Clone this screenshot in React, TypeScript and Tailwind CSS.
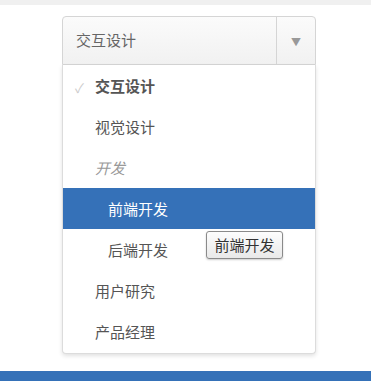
import React from "react";

const font = { fontFamily: '"Noto Sans CJK SC", "Noto Sans", sans-serif' };

function Item({ children, active = false, selected = false, indent = false }: { children: React.ReactNode; active?: boolean; selected?: boolean; indent?: boolean }) {
  return (
    <div
      className={`relative h-[41px] flex items-center pt-[2px] text-[15px] ${indent ? "pl-[45px]" : "pl-[32px]"} ${active ? "bg-[#3571b8] text-white" : "text-[#555]"} ${selected ? "font-bold text-[#444]" : ""}`}
    >
      {selected && (
        <span className="absolute left-[12px] top-[13px] text-[#ccc] text-[13px] font-normal">✓</span>
      )}
      {children}
    </div>
  );
}

export default function App() {
  return (
    <div className="w-[371px] h-[381px] bg-white flex flex-col overflow-hidden" style={font}>
      <div className="h-[5px] bg-[#f0f0f0] shrink-0" />
      <div className="flex-1 relative">
        <div className="ml-[62px] mt-[11px] w-[254px]">
          <div className="h-[49px] flex border border-[#d5d5d5] rounded-t-[4px] bg-gradient-to-b from-[#fbfbfb] to-[#f1f1f1]">
            <div className="flex-1 flex items-center pl-[13px] text-[15px] text-[#666]">交互设计</div>
            <div className="w-[39px] border-l border-[#d5d5d5] flex items-center justify-center text-[#999] text-[10px] pt-[2px]">▼</div>
          </div>
          <div className="pb-[1px] bg-white border border-t-0 border-[#dcdcdc] rounded-b-[4px] shadow-[0_2px_4px_rgba(0,0,0,0.12)]">
            <Item selected>交互设计</Item>
            <Item>视觉设计</Item>
            <div className="h-[41px] flex items-center pt-[2px] pl-[32px] text-[15px] italic text-[#999]">开发</div>
            <Item active indent>前端开发</Item>
            <Item indent>后端开发</Item>
            <Item>用户研究</Item>
            <Item>产品经理</Item>
          </div>
        </div>
        <div className="absolute left-[206px] top-[226px] w-[77px] h-[28px] flex items-center justify-center border border-[#8a8a8a] rounded-[3px] bg-gradient-to-b from-[#fdfdfd] to-[#e9e9e9] text-[15px] text-[#333] shadow-[0_1px_2px_rgba(0,0,0,0.2)]">
          前端开发
        </div>
      </div>
      <div className="h-[10px] bg-[#3571b8] shrink-0" />
    </div>
  );
}
